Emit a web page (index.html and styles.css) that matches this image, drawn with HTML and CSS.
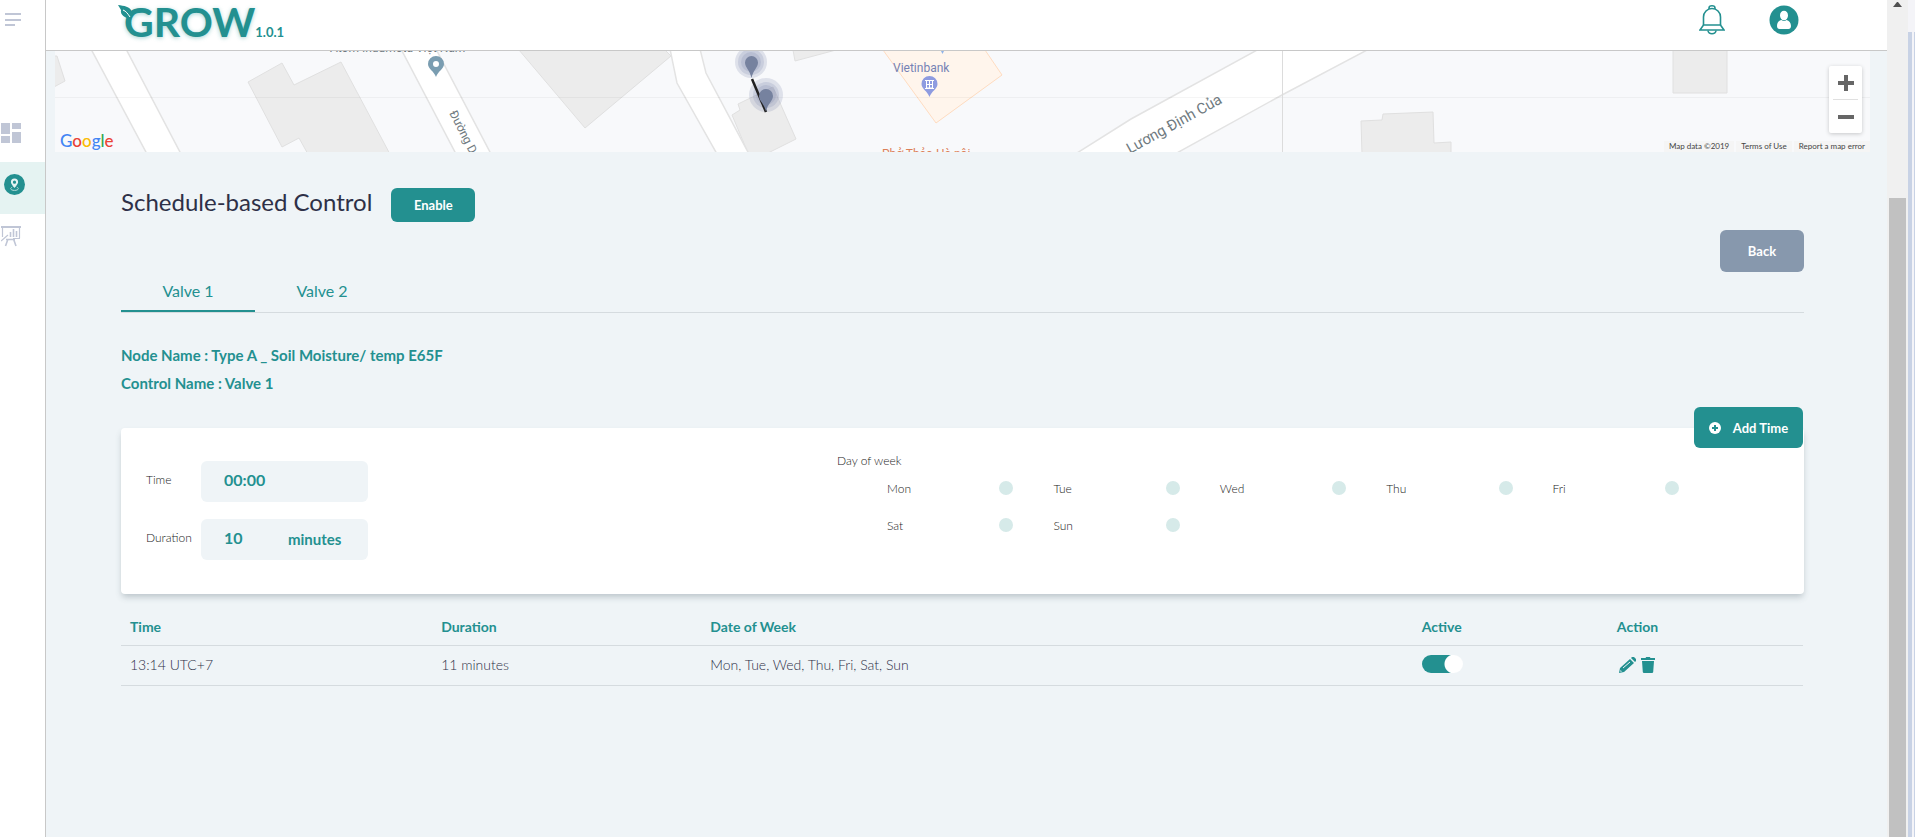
FILE: index.html
```html
<!DOCTYPE html>
<html lang="en">
<head>
<meta charset="utf-8">
<title>GROW</title>
<link rel="stylesheet" href="styles.css">
</head>
<body>
<div class="app">
  <nav class="sidebar" aria-label="Main">
    <button class="menu" type="button" aria-label="Toggle menu">
      <svg width="16" height="14" viewBox="0 0 16 14" fill="#c0c6d6"><path d="M0 0h16v2H0zM0 6h16v2H0zM0 11h10v2H0z"/></svg>
    </button>
    <a class="nav-item" href="#dashboard" aria-label="Dashboard">
      <svg width="20" height="20" viewBox="0 0 20 20" fill="#c0c6d6"><path d="M0 0h9v11H0zM11 0h9v6h-9zM0 13h9v7H0zM11 9h9v11h-9z"/></svg>
    </a>
    <a class="nav-item nav-item-active" href="#map" aria-label="Map">
      <svg width="21" height="21" viewBox="0 0 21 21"><circle cx="10.500" cy="10.500" r="10.500" fill="#239090"/><path fill="#e5f3f2" fill-rule="evenodd" d="M10.500 4.500a3.600 3.600 0 0 0-3.600 3.600c0 2.200 3.600 6 3.600 6s3.600-3.800 3.600-6a3.600 3.600 0 0 0-3.600-3.600zm0 2.100a1.600 1.600 0 1 1 0 3.200 1.600 1.600 0 0 1 0-3.200z"/><path d="M8.200 13.200c-3 1.200-1.200 3.200 2.300 3.200s5.300-2 2.300-3.200" fill="none" stroke="#b4dcd9"/></svg>
    </a>
    <a class="nav-item nav-item-reports" href="#reports" aria-label="Reports">
      <svg width="20" height="22" viewBox="0 0 20 22" fill="none" stroke="#c0c6d6"><path stroke-width="2" d="M0 2h20"/><path stroke-width="1.200" d="M1.500 2v10M18.500 2v11M12 13.500h7M0 16l7-6"/><path stroke-width="1.600" d="M9.500 7v5M12.500 4v8M15.500 6v6M7 14l-2.500 7M12.500 14l2.500 7M5 14.500h9"/></svg>
    </a>
  </nav>

  <div class="page">
    <header class="topbar">
      <a class="brand" href="#home">
        <svg class="leaf" width="15" height="14" viewBox="0 0 15 14"><path fill="#239090" d="M0 0c6 1 12 1 14 7 .7 2-.5 5-1 7C7 13 2 10 3 5 2 3 1 2 0 0z"/><path d="M5 5c3 1 5 4 7 7" fill="none" stroke="#fff"/></svg>
        <span class="brand-name">GROW</span><span class="brand-version">1.0.1</span>
      </a>
      <div class="topbar-actions">
        <button class="icon-button" type="button" aria-label="Notifications">
          <svg width="26" height="30" viewBox="0 0 26 30" fill="none" stroke="#239090" stroke-width="1.600"><path d="M1 25h24l-3.500-5H4.500z"/><path d="M4.500 20V12a8.500 8.500 0 0 1 17 0v8M10 4V3a3 2.200 0 0 1 6 0v1M9 25.500a4 3.200 0 0 0 8 0"/></svg>
        </button>
        <button class="icon-button" type="button" aria-label="Account">
          <svg width="30" height="30" viewBox="0 0 30 30"><circle cx="15" cy="15" r="14.500" fill="#239090"/><ellipse cx="15" cy="10.500" rx="4" ry="4.800" fill="#fff"/><path fill="#fff" d="M8 21c0-3.500 2-5.500 4.500-6 1.500 1.200 3.500 1.200 5 0 2.500.5 4.500 2.500 4.500 6 0 2-1 3-2.500 3h-9C9 24 8 23 8 21z"/></svg>
        </button>
      </div>
    </header>

    <main>
      <section class="map" aria-label="Map">
        <svg class="map-canvas" viewBox="55 51 1815 101" preserveAspectRatio="xMinYMin slice">
          <path fill="#f8f9fb" d="M55 51h1815v101H55z"/>
          <g fill="#ececec" stroke="#e0e0e0">
            <path d="M54 56l3 0 8 25-11 6z"/>
            <path d="M248 82l34-19 12 22 47-23 50 94h-82l-10-18-17 9z"/>
            <path d="M519 50l66 78 86-72-6-6z"/>
            <path d="M732 115l8-5-2-6 35-17 23 52-28 14h-20z"/>
            <path d="M793 50l2 11 41-11z"/>
            <path d="M1361 121l21-1 1-6 50-2 1 31 17-1v12h-89z"/>
            <path d="M1673 50h54v43h-54z"/>
          </g>
          <path fill="#fff5ec" stroke="#ffdcc0" d="M883 50l53 73 66-48-17-25z"/>
          <g fill="#fff" stroke="#e3e3e3" stroke-width="1.500">
            <path d="M91 49l56 105h34L126 49z"/>
            <path d="M401 49l55 105h35L436 49z"/>
            <path d="M670 49l7 34 40 71h32l-43-81-6-24z"/>
            <path d="M1077 153l54-34 128-70h110l-87 46-107 59z"/>
          </g>
          <path stroke="#000" stroke-opacity=".04" d="M55 97.500h1815"/>
          <path stroke="#dcdcdc" d="M1282.500 51v101"/>
          <g class="map-label" fill="#6f7a80">
            <text x="330" y="52" font-size="12">Atom Indumota Việt Nam</text>
            <text transform="translate(449 113) rotate(63)" font-size="12">Đường Dương</text>
            <text transform="translate(1130 154) rotate(-29)" font-size="15">Lương Định Của</text>
            <text x="882" y="158" font-size="12" fill="#dc8058">Phở Thảo Hà nội</text>
            <text x="893" y="72" font-size="12" fill="#7582b5">Vietinbank</text>
          </g>
          <path fill="#7a9db1" fill-rule="evenodd" d="M436 56a8 8 0 0 0-8 8c0 5 6 7 8 13 2-6 8-8 8-13a8 8 0 0 0-8-8zm0 5a3 3 0 1 1 0 6 3 3 0 0 1 0-6z"/>
          <path fill="#8e9be0" d="M929.500 76a8 8 0 0 0-8 8c0 5 6 7 8 13 2-6 8-8 8-13a8 8 0 0 0-8-8z"/>
          <path fill="none" stroke="#fff" d="M925 80.500h9M926.500 81v7h6v-7M929.500 81v7M926.500 84.500h6M925 88.500h9"/>
          <path fill="#8fb3e8" d="M941 51h3l-1.500 3z"/>
          <g fill="#7884a8">
            <g fill-opacity=".2"><circle cx="751" cy="62" r="16"/><circle cx="751" cy="62" r="13"/><circle cx="751" cy="62" r="10"/></g>
            <g fill-opacity=".2"><circle cx="766" cy="95" r="17"/><circle cx="766" cy="95" r="13"/><circle cx="766" cy="95" r="10"/></g>
            <path stroke="#222" stroke-width="2.500" d="M752 79l14 33"/>
            <path fill="#76829f" d="M751.500 56a6.500 6.500 0 0 0-6.500 6.500c0 5 5 8 6.500 15.500 1.500-7.500 6.500-10.500 6.500-15.500a6.500 6.500 0 0 0-6.500-6.500zM766 89a7 7 0 0 0-7 7c0 5 5.500 8 7 15.500 1.500-7.500 7-10.500 7-15.500a7 7 0 0 0-7-7z"/>
          </g>
        </svg>
        <span class="map-logo"><span class="g-blue">G</span><span class="g-red">o</span><span class="g-yellow">o</span><span class="g-blue">g</span><span class="g-green">l</span><span class="g-red">e</span></span>
        <div class="map-zoom">
          <button type="button" aria-label="Zoom in"><svg width="16" height="16" viewBox="0 0 16 16" fill="#666"><path d="M6 0h4v6h6v4h-6v6H6v-6H0V6h6z"/></svg></button>
          <button type="button" aria-label="Zoom out"><svg width="16" height="4" viewBox="0 0 16 4" fill="#666"><path d="M0 0h16v4H0z"/></svg></button>
        </div>
        <div class="map-credits"><span>Map data ©2019</span><a href="#terms">Terms of Use</a><a href="#report">Report a map error</a></div>
      </section>

      <div class="content">
        <div class="title-row">
          <h1>Schedule-based Control</h1>
          <button class="button enable" type="button">Enable</button>
        </div>
        <div class="back-row"><button class="button back" type="button">Back</button></div>

        <div class="tabs">
          <a class="tab tab-active" href="#valve-1">Valve 1</a>
          <a class="tab" href="#valve-2">Valve 2</a>
        </div>

        <div class="details">
          <p>Node Name : Type A _ Soil Moisture/ temp E65F</p>
          <p>Control Name : Valve 1</p>
        </div>

        <form class="panel">
          <button class="button add" type="button">
            <svg width="12" height="12" viewBox="0 0 12 12"><circle cx="6" cy="6" r="6" fill="#fff"/><path fill="#239090" d="M5 3h2v2h2v2H7v2H5V7H3V5h2z"/></svg>
            Add Time
          </button>
          <div class="fields">
            <label for="time">Time</label>
            <div class="field"><input id="time" type="text" value="00:00"></div>
            <label for="duration">Duration</label>
            <div class="field"><input id="duration" class="short" type="text" value="10"><span class="unit">minutes</span></div>
          </div>
          <div class="days" role="group" aria-labelledby="days-title">
            <div id="days-title">Day of week</div>
            <div class="day-grid">
              <label class="day">Mon<input type="checkbox"></label>
              <label class="day">Tue<input type="checkbox"></label>
              <label class="day">Wed<input type="checkbox"></label>
              <label class="day">Thu<input type="checkbox"></label>
              <label class="day">Fri<input type="checkbox"></label>
              <label class="day">Sat<input type="checkbox"></label>
              <label class="day">Sun<input type="checkbox"></label>
            </div>
          </div>
        </form>

        <div class="schedule-wrap">
        <table class="schedule">
          <colgroup><col class="c-time"><col class="c-duration"><col class="c-days"><col class="c-active"><col></colgroup>
          <thead><tr><th>Time</th><th>Duration</th><th>Date of Week</th><th>Active</th><th>Action</th></tr></thead>
          <tbody>
            <tr>
              <td>13:14 UTC+7</td>
              <td>11 minutes</td>
              <td>Mon, Tue, Wed, Thu, Fri, Sat, Sun</td>
              <td><input class="toggle" type="checkbox" aria-label="Active" checked></td>
              <td>
                <div class="actions">
                  <button class="icon-button" type="button" aria-label="Edit"><svg width="18" height="16" viewBox="0 0 18 16"><path fill="#239090" d="M0 16l1-5L11 2l4 4L5 15zM12 1l1-1h2l2 2v2l-1 1z"/><path d="M4 11l7-6" stroke="#eff4f7"/><path fill="#eff4f7" d="M1.500 13l1.500 1.500-1.700.3z"/></svg></button>
                  <button class="icon-button" type="button" aria-label="Delete"><svg width="14" height="16" viewBox="0 0 14 16" fill="#239090"><path d="M0 1h4.500l.7-1h3.600l.7 1H14v2H0zM1 4h12l-.8 11q-.1 1-1.200 1H3q-1.100 0-1.200-1z"/></svg></button>
                </div>
              </td>
            </tr>
          </tbody>
        </table>
        </div>
      </div>
    </main>
  </div>

  <div class="scrollbar" aria-hidden="true">
    <svg width="9" height="5" viewBox="0 0 9 5" fill="#505050"><path d="M4 0h1l4 5H0z"/></svg>
    <div class="thumb"></div>
  </div>
  <div class="edge" aria-hidden="true"><i></i><i></i></div>
</div>
</body>
</html>
```
FILE: styles.css
```css
* { box-sizing: border-box; }

body {
  margin: 0;
  background: #eff4f7;
  color: #2e3047;
  font-family: Lato, "Liberation Sans", sans-serif;
  font-size: 14px;
  line-height: 20px;
}

button, input { font: inherit; }
button { padding: 0; border: 0; background: none; cursor: pointer; }
a { color: inherit; text-decoration: none; }
svg { display: block; }
h1, p { margin: 0; font-weight: 400; }

.app { display: flex; height: 100vh; overflow: hidden; }

/* Sidebar */
.sidebar {
  flex: none;
  width: 46px;
  background: #fff;
  border-right: 1px solid #c8c8c8;
}
.menu { display: block; height: 40px; padding-left: 5px; margin-bottom: 67px; }
.nav-item { display: flex; align-items: center; height: 52px; padding: 0 1px; margin-bottom: 3px; }
.nav-item + .nav-item { margin-bottom: 0; }
.nav-item-active { padding: 0 4px 8px; background: #e5f3f2; }
.nav-item-reports { padding-bottom: 8px; }

/* Header */
.page { flex: 1; min-width: 0; overflow: hidden; }
.topbar {
  display: flex;
  justify-content: space-between;
  height: 51px;
  padding: 0 88px 0 72px;
  background: #fff;
  border-bottom: 1px solid #c8c8c8;
}
.brand { position: relative; display: flex; align-items: baseline; color: #239090; }
.leaf { position: absolute; left: 0; top: 5px; }
.brand-name {
  padding-left: 6px;
  font-size: 41px;
  font-weight: 700;
  line-height: 44px;
  text-shadow: 0 1px 4px rgba(35, 144, 144, .4);
}
.brand-version { font-size: 13px; font-weight: 700; }
.topbar-actions { display: flex; align-items: flex-start; gap: 44px; padding-top: 5px; }

/* Map */
.map { position: relative; margin: 0 17px 0 9px; height: 101px; overflow: hidden; }
.map-canvas { width: 100%; height: 100%; }
.map-label { font-family: Roboto, sans-serif; }
.map-logo { position: absolute; left: 5px; bottom: 1px; font-size: 17px; font-weight: 500; }
.g-blue { color: #4285f4; }
.g-red { color: #ea4335; }
.g-yellow { color: #fbbc05; }
.g-green { color: #34a853; }
.map-zoom {
  position: absolute;
  right: 8px;
  top: 15px;
  width: 33px;
  padding: 0 4px;
  background: #fff;
  border-radius: 2px;
  box-shadow: 0 1px 4px rgba(0, 0, 0, .2);
}
.map-zoom button { display: flex; align-items: center; justify-content: center; width: 100%; height: 33px; }
.map-zoom button + button { border-top: 1px solid #e0e0e0; height: 34px; }
.map-credits { position: absolute; right: 0; bottom: 0; display: flex; gap: 2px; color: #444; font-size: 8px; line-height: 11px; }
.map-credits > * { padding: 0 5px; background: #f5f5f5; }

/* Content */
.content { padding: 36px 83px 0 75px; }
.title-row { display: flex; align-items: center; gap: 19px; }
h1 { font-size: 24px; line-height: 28px; padding-bottom: 6px; }
.button { border-radius: 6px; background: #239090; color: #fff; font-size: 13px; font-weight: 700; }
.enable { width: 84px; height: 34px; }
.back-row { display: flex; justify-content: flex-end; padding-top: 8px; }
.back { width: 84px; height: 42px; background: #8798ad; }
.tabs { display: flex; border-bottom: 1px solid #d5dbdf; color: #239090; font-size: 16px; }
.tab { width: 134px; height: 40px; padding-top: 9px; text-align: center; border-bottom: 2px solid transparent; }
.tab-active { border-color: #239090; }
.details { padding: 28px 0 31px; color: #239090; font-size: 15px; line-height: 28px; }
.details p { font-weight: 700; }

.panel {
  position: relative;
  display: grid;
  grid-template-columns: 691fr 882fr;
  height: 166px;
  padding: 33px 85px 0 25px;
  background: #fff;
  border-radius: 4px;
  box-shadow: 0 4px 6px -1px rgba(70, 90, 100, .3);
}
.add {
  position: absolute;
  right: 1px;
  top: -21px;
  display: flex;
  align-items: center;
  justify-content: center;
  gap: 12px;
  width: 109px;
  height: 41px;
}
.fields {
  display: grid;
  grid-template-columns: 55px 167px;
  grid-auto-rows: 41px;
  row-gap: 17px;
  color: #222;
  font-size: 12px;
  font-weight: 300;
}
.fields label { padding-top: 9px; }
.field { display: flex; align-items: center; padding: 0 0 2px 23px; border-radius: 6px; background: #eff4f7; color: #239090; font-size: 16px; font-weight: 700; }
.field input { width: 100px; padding: 0 0 2px; border: 0; background: none; color: inherit; }
.field .short { width: 64px; }
.unit { font-size: 15px; }
.days { min-width: 0; margin-top: -10px; color: #222; font-size: 12px; font-weight: 300; }
.day-grid { display: grid; grid-template-columns: repeat(5, 1fr); grid-auto-rows: 37px; padding: 8px 0 0 50px; }
.day { display: flex; justify-content: space-between; align-items: flex-start; padding-right: 40px; }
.day input { appearance: none; width: 14px; height: 14px; margin: 2px 0 0; border-radius: 50%; background: #d6eae9; }

/* Schedule */
.schedule-wrap { padding: 15px 1px 0 0; }
.schedule { width: 100%; border-collapse: collapse; table-layout: fixed; }
.schedule th, .schedule td { padding: 0 9px; text-align: left; border-bottom: 1px solid #d5dbdf; }
.schedule th { height: 36px; color: #239090; font-weight: 700; }
.schedule td { height: 40px; font-weight: 300; }
.c-time { width: 18.5%; }
.c-duration { width: 16%; }
.c-days { width: 42.3%; }
.c-active { width: 11.6%; }
.toggle { appearance: none; display: block; width: 41px; height: 18px; margin: 0 0 3px; border-radius: 9px; background: radial-gradient(circle at 32px 9px, #fff 9px, transparent 10px), linear-gradient(to right, #239090 34px, transparent 34px); }
.actions { display: flex; gap: 4px; padding-left: 2px; }

/* Scrollbar and window edge */
.scrollbar { flex: none; display: flex; flex-direction: column; align-items: center; width: 21px; padding-top: 2px; background: #f0f0f0; }
.thumb { flex: 1; width: 17px; margin-top: 191px; background: #c1c1c1; }
.edge { flex: none; display: flex; gap: 2px; width: 7px; padding-top: 32px; background: #f4f4f8; }
.edge i { width: 4px; background: #c8d2e5; }
.edge i + i { width: 1px; }
```
